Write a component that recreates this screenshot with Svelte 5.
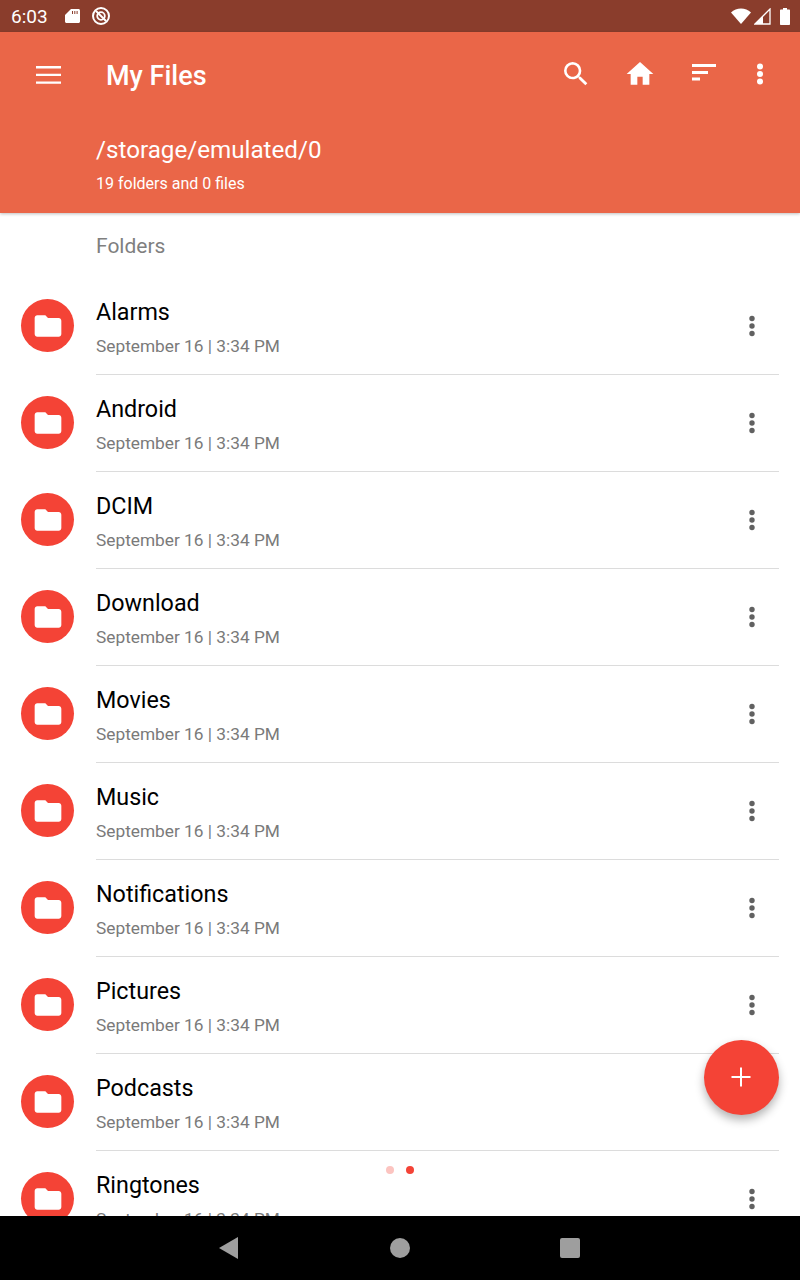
<script>
	const folders = ['Alarms', 'Android', 'DCIM', 'Download', 'Movies', 'Music', 'Notifications', 'Pictures', 'Podcasts', 'Ringtones'];
</script>

<div class="page">
	<div class="status">
		<span class="time">6:03</span>
		<svg class="sd" width="16" height="16" viewBox="0 0 16 16"><path d="M6 1h7.500c.8 0 1.500.7 1.500 1.500v11c0 .8-.7 1.500-1.500 1.500h-12C.7 15 0 14.300 0 13.500V7z" fill="#fff"/><path d="M7 3h1v3H7zM9.300 3h1v3h-1zM11.600 3h1v3h-1z" fill="#8a3d2c"/></svg>
		<svg class="sync" width="20" height="20" viewBox="0 0 20 20" fill="none" stroke="#fff"><circle cx="10" cy="10" r="8" stroke-width="2"/><circle cx="10" cy="10" r="3.800" stroke-width="1.800"/><path d="M5 5l10 10" stroke-width="2"/></svg>
		<span class="spacer"></span>
		<svg width="20" height="16" viewBox="0 0 20 16"><path d="M0 4.500C2.800 1.800 6.200.5 10 .5s7.200 1.300 10 4L10 16z" fill="#fff"/></svg>
		<svg class="signal" width="17" height="17" viewBox="0 0 17 17"><path d="M16 1v15H1z" fill="none" stroke="#fff" stroke-width="1.300"/><path d="M9 8.500V16H1z" fill="#fff"/></svg>
		<svg class="battery" width="10" height="17" viewBox="0 0 10 17"><path d="M3 0h4v1.500h2c.6 0 1 .4 1 1V16c0 .6-.4 1-1 1H1c-.6 0-1-.4-1-1V2.500c0-.6.4-1 1-1h2z" fill="#fff"/></svg>
	</div>

	<header>
		<div class="toolbar">
			<svg class="menu" width="25" height="18" viewBox="0 0 25 18" fill="#fff"><path d="M0 0h25v2.400H0zM0 7.700h25v2.400H0zM0 15.400h25v2.400H0z"/></svg>
			<h1>My Files</h1>
			<span class="spacer"></span>
			<div class="actions">
				<svg width="32" height="32" viewBox="0 0 24 24" fill="#fff"><path d="M15.500 14h-.79l-.28-.27A6.470 6.470 0 0 0 16 9.500 6.500 6.500 0 1 0 9.500 16c1.610 0 3.090-.59 4.230-1.570l.27.28v.79l5 4.990L20.490 19l-4.990-5zm-6 0C7.010 14 5 11.990 5 9.500S7.010 5 9.500 5 14 7.010 14 9.500 11.990 14 9.500 14z"/></svg>
				<svg width="32" height="32" viewBox="0 0 24 24" fill="#fff"><path d="M10 20v-6h4v6h5v-8h3L12 3 2 12h3v8z"/></svg>
				<svg width="32" height="32" viewBox="0 0 32 32" fill="#fff"><path d="M4 6h24v3H4zM4 13h16v3H4zM4 19.500h8v3H4z"/></svg>
				<svg class="overflow" width="32" height="32" viewBox="0 0 32 32" fill="#fff"><circle cx="16" cy="8.500" r="3"/><circle cx="16" cy="16" r="3"/><circle cx="16" cy="23.500" r="3"/></svg>
			</div>
		</div>
		<div class="path">/storage/emulated/0</div>
		<div class="count">19 folders and 0 files</div>
	</header>

	<main>
		<div class="section">Folders</div>
		{#each folders as name}
			<div class="row">
				<div class="badge">
					<svg width="32" height="32" viewBox="0 0 24 24" fill="#fff"><path d="M10 4H4c-1.100 0-2 .9-2 2v12c0 1.100.9 2 2 2h16c1.100 0 2-.9 2-2V8c0-1.100-.9-2-2-2h-8l-2-2z"/></svg>
				</div>
				<div class="body">
					<div class="text">
						<div class="name">{name}</div>
						<div class="date">September 16 | 3:34 PM</div>
					</div>
					<svg class="more" width="24" height="24" viewBox="0 0 24 24" fill="#616161"><circle cx="12" cy="4.500" r="2.700"/><circle cx="12" cy="12" r="2.700"/><circle cx="12" cy="19.500" r="2.700"/></svg>
				</div>
			</div>
		{/each}
		<div class="dots"><span class="dot faint"></span><span class="dot"></span></div>
		<button class="fab" aria-label="Add">
			<svg width="24" height="24" viewBox="0 0 24 24" fill="#fff"><path d="M11 2.500h2V11h8.500v2H13v8.500h-2V13H2.500v-2H11z"/></svg>
		</button>
	</main>

	<nav>
		<svg class="back" width="19" height="22" viewBox="0 0 19 22" fill="#9e9e9e"><path d="M19 0v22L0 11z"/></svg>
		<span class="home"></span>
		<span class="recent"></span>
	</nav>
</div>

<style>
	:global(body) {
		margin: 0;
		font-family: Roboto, sans-serif;
	}
	.page {
		width: 800px;
		height: 1280px;
		display: flex;
		flex-direction: column;
		overflow: hidden;
		background: #fff;
	}
	.spacer {
		flex: 1;
	}
	.status {
		height: 32px;
		flex: none;
		display: flex;
		align-items: center;
		padding: 0 10px 0 11px;
		background: #8a3d2c;
		color: #fff;
	}
	.time {
		font-size: 19px;
		width: 54px;
	}
	.sync {
		margin-left: 10px;
	}
	.signal {
		margin-left: 3px;
	}
	.battery {
		margin-left: 9px;
	}
	header {
		flex: none;
		height: 181px;
		box-sizing: border-box;
		background: #ea6648;
		color: #fff;
		box-shadow: 0 1px 3px rgba(0, 0, 0, 0.25);
		z-index: 1;
	}
	.toolbar {
		height: 86px;
		display: flex;
		align-items: center;
		padding: 0 24px 0 36px;
	}
	.menu {
		margin-right: 45px;
	}
	h1 {
		margin: 2px 0 0;
		font-size: 27px;
		font-weight: 500;
	}
	.actions {
		display: flex;
		align-items: center;
		gap: 32px;
		margin-bottom: 3px;
	}
	.overflow {
		margin-left: -8px;
	}
	.path {
		margin: 16px 0 0 96px;
		font-size: 24.2px;
		line-height: 32px;
	}
	.count {
		margin: 9px 0 0 96px;
		font-size: 16px;
		line-height: 18px;
	}
	main {
		flex: 1;
		min-height: 0;
		position: relative;
		overflow: hidden;
	}
	.section {
		height: 65px;
		box-sizing: border-box;
		padding: 20px 0 0 96px;
		font-size: 21px;
		line-height: 26px;
		color: #7f7f7f;
	}
	.row {
		height: 97px;
		display: flex;
	}
	.badge {
		width: 53px;
		height: 53px;
		margin: 21px 22px 0 21px;
		flex: none;
		border-radius: 50%;
		background: #f44336;
		display: flex;
		align-items: center;
		justify-content: center;
	}
	.body {
		flex: 1;
		margin-right: 21px;
		display: flex;
		align-items: center;
		border-bottom: 1px solid #dcdcdc;
		box-sizing: border-box;
	}
	.text {
		flex: 1;
		padding-top: 1px;
	}
	.name {
		font-size: 23.300px;
		line-height: 30px;
		color: #000;
	}
	.date {
		margin-top: 8px;
		font-size: 17.300px;
		line-height: 22px;
		color: #7a7a7a;
	}
	.more {
		margin-right: 15px;
	}
	.dots {
		position: absolute;
		left: 386px;
		top: 953px;
		display: flex;
		gap: 12px;
	}
	.dot {
		width: 8px;
		height: 8px;
		border-radius: 50%;
		background: #f44336;
	}
	.faint {
		background: #fcc4c0;
	}
	.fab {
		position: absolute;
		left: 704px;
		top: 827px;
		width: 75px;
		height: 75px;
		padding: 0 1px 1px 0;
		border: none;
		border-radius: 50%;
		background: #f44336;
		box-shadow: 0 5px 10px rgba(0, 0, 0, 0.3);
		display: flex;
		align-items: center;
		justify-content: center;
	}
	nav {
		height: 64px;
		flex: none;
		background: #000;
		display: grid;
		grid-template-columns: 19px 20px 20px;
		column-gap: 150px;
		justify-content: center;
		align-items: center;
	}
	.back {
		margin-left: -2px;
	}
	.home {
		width: 20px;
		height: 20px;
		border-radius: 50%;
		background: #9e9e9e;
	}
	.recent {
		width: 20px;
		height: 20px;
		border-radius: 2px;
		background: #9e9e9e;
	}
</style>
